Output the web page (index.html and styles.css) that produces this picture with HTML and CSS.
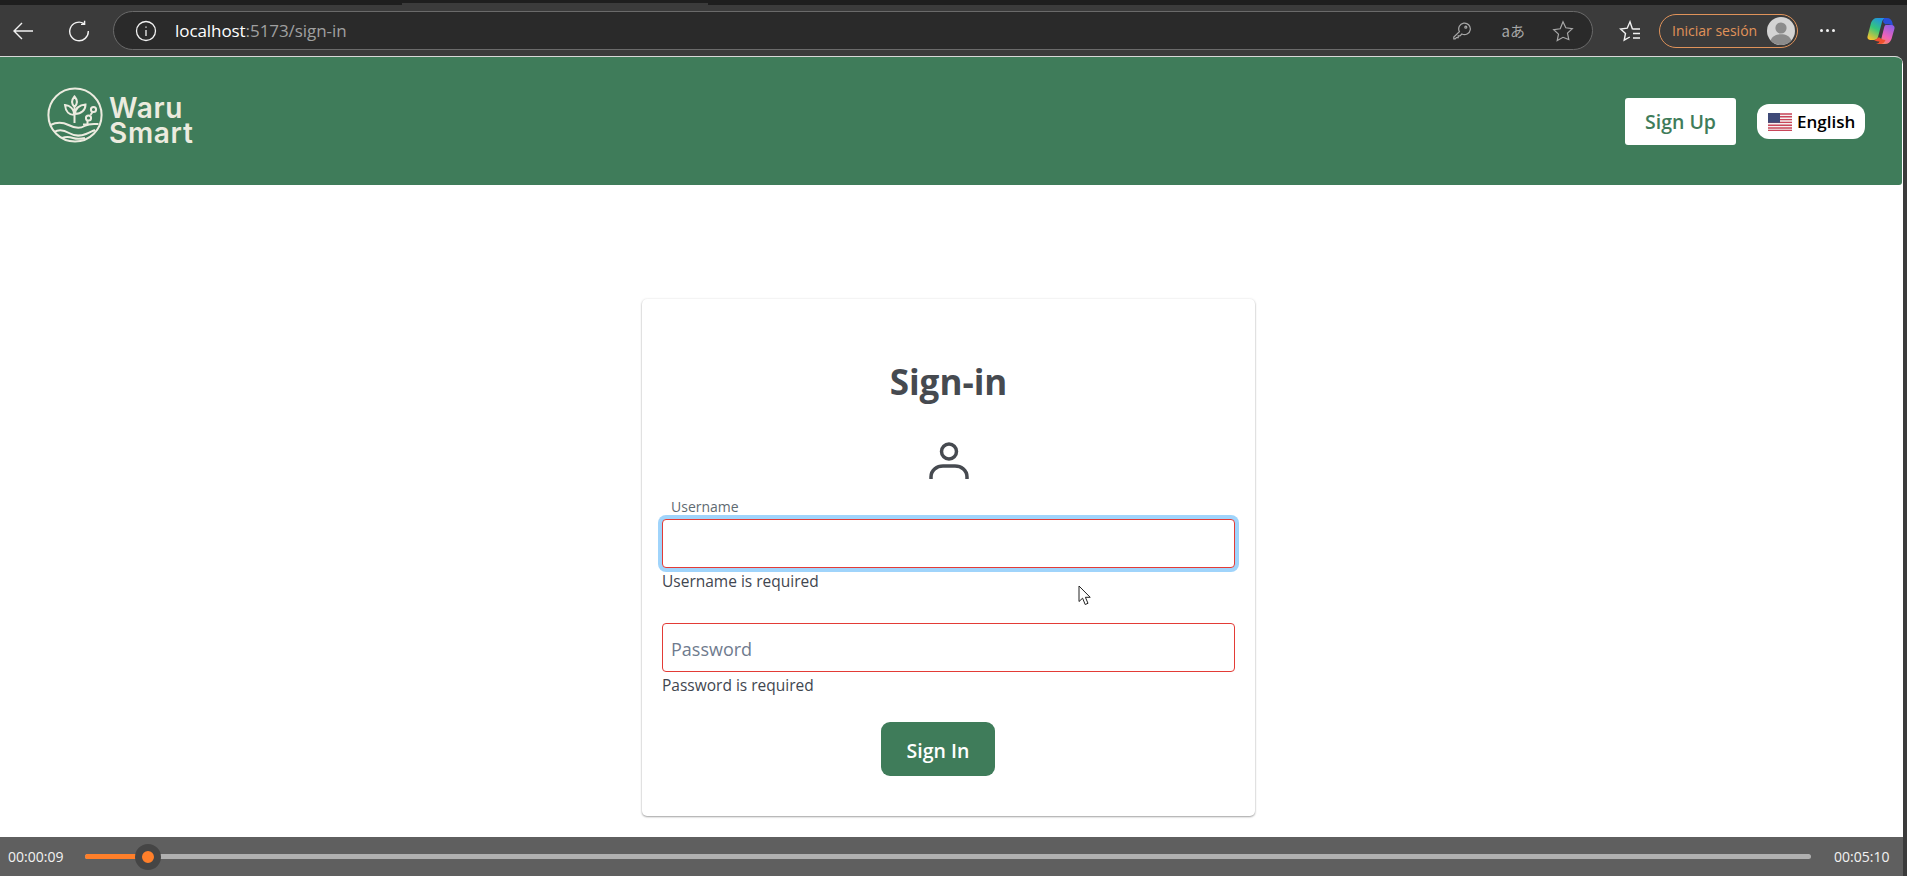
FILE: index.html
```html
<!doctype html>
<html lang="en">
    <head>
        <meta charset="UTF-8" />
        <meta name="viewport" content="width=device-width, initial-scale=1.0" />
        <title>Sign-in</title>
        <link rel="stylesheet" href="styles.css">
    </head>
    <body>
        <div class="tab-strip"><div class="tab-strip-light"></div></div>

        <!-- Browser toolbar -->
        <div class="toolbar">
            <svg class="tool-icon back-icon" width="22" height="20" viewBox="0 0 22 20"><path d="M21 10H2M10 2l-8 8 8 8" /></svg>
            <svg class="tool-icon reload-icon" width="22" height="22" viewBox="0 0 22 22"><path d="M16 3.6a9.3 9.3 0 1 0 4.3 7.4M16.6 0.8v3.6H13" /></svg>
            <div class="address-bar">
                <svg class="info-icon" width="22" height="22" viewBox="0 0 22 22"><circle cx="11" cy="11" r="9.5" /><path d="M11 10v6M11 6.4v1.4" /></svg>
                <span class="url"><span class="url-host">localhost</span>:5173/sign-in</span>
                <div class="address-icons">
                    <svg width="18" height="18" viewBox="0 0 18 18"><path d="M6.400 9.600a5.800 5.800 0 1 1 2.400 2.400L7 13.800H5.200v1.800H3.400L2.200 16.800H.800v-1.800z" /><circle cx="12.800" cy="5.200" r="1" /></svg>
                    <span class="translate-icon">aあ</span>
                    <svg width="22" height="22" viewBox="0 0 22 22"><path d="m11 1.800 2.800 6 6.500.8-4.800 4.500 1.300 6.500L11 17.300l-5.800 3.300 1.300-6.500-4.800-4.500 6.500-.8z" /></svg>
                </div>
            </div>
            <svg class="tool-icon fav-icon" width="22" height="22" viewBox="0 0 22 22"><path d="M13.600 9.500 11 1.800 8.200 8.200l-6.600.8 4.900 4.500-1.300 6.700 5.600-3.200M14 9h7M14 13.500h7M14 18h7" /></svg>
            <div class="profile-pill">
                <span>Iniciar sesión</span>
                <svg width="28" height="28" viewBox="0 0 28 28">
                    <circle cx="14" cy="14" r="14" fill="#d3d3d3" />
                    <circle cx="14" cy="11" r="5.600" fill="#8b8b8b" />
                    <path d="M3.600 23.400c1.600-4.400 5.600-6.200 10.400-6.200s8.800 1.800 10.400 6.200A14 14 0 0 1 3.600 23.400z" fill="#8b8b8b" />
                </svg>
            </div>
            <div class="more-dots"><i></i><i></i><i></i></div>
            <svg class="copilot" width="28" height="28" viewBox="0 0 28 28">
                <defs>
                    <linearGradient id="copLeft" x1="0.7" y1="0" x2="0.2" y2="1"><stop offset="0" stop-color="#1f8fe8" /><stop offset="0.5" stop-color="#35c77a" /><stop offset="1" stop-color="#f7c32e" /></linearGradient>
                    <linearGradient id="copRight" x1="0.8" y1="0" x2="0.3" y2="1"><stop offset="0" stop-color="#8f5fe8" /><stop offset="0.6" stop-color="#f062b8" /><stop offset="1" stop-color="#f58a5a" /></linearGradient>
                </defs>
                <path d="M10 1h10c-3 0-4.500 2-5 4l-4 15c-.5 2-2 3-4 3H3.500C1.500 23 0 21.500.5 19.500L4 6c1-3 3-5 6-5z" fill="url(#copLeft)" />
                <path d="M17 1h3c3 0 5 2 5.500 5l.5 3c-2-1.500-5-2-7.500-1.500L16 5z" fill="#2a4fd8" />
                <path d="M19 8h5.500c2 0 3.500 1.500 3 3.500L24.500 22c-1 3-3.500 5-6.500 5H9c3 0 4.500-2 5-4l3-12c.4-1.800 1-3 2-3z" fill="url(#copRight)" />
                <path d="M7 23c1.500 0 3-1 4-2.500l1.500 0c1.500 1.500 3.500 2.500 6 2.500-1 2.500-3 4-5.500 4H9c2 0 3-1 3.500-2.500C11 24.500 9 24 7 23z" fill="#f0502f" />
            </svg>
        </div>

        <div class="viewport">
            <div class="site-header">
                <div class="logo">
                    <svg class="logo-mark" width="56" height="58" viewBox="0 0 56 58">
                        <circle cx="28" cy="29" r="26.600" />
                        <path d="M27.500 37V21M27.500 29c-5 0-9-3.500-9.500-10 5 .5 9 4 9.500 10zM28 28c.5-5 4-9 10.500-9.500 0 5.500-4 9.500-10.500 9.500zM27.500 21c-3-3-3-7 0-10.500 3 3.500 3 7.500 0 10.500z" />
                        <path d="M3.500 39c6-3 12-3 18 0s11 4 16 1 9-2 14-2M7 46c5-3 10-2 15 1s12 3 17 1 6-3 9-4M15 52c4-1.500 8-1 11 0s8 1 12 0" />
                        <path d="M36 38.500h4.500v-4M43.500 29l2-3" />
                        <circle cx="41.500" cy="32" r="2.600" />
                        <circle cx="46.500" cy="23.500" r="2.600" />
                    </svg>
                    <div class="logo-text">Waru<br />Smart</div>
                </div>
                <div class="header-actions">
                    <button class="signup-btn">Sign Up</button>
                    <button class="lang-btn">
                        <svg width="24" height="18" viewBox="0 0 24 18">
                            <rect width="24" height="18" fill="#f4f0f0" />
                            <path d="M0 1h24M0 3.800h24M0 6.600h24M0 9.400h24M0 12.200h24M0 15h24M0 17.400h24" stroke="#c9465a" stroke-width="1.400" />
                            <rect width="12" height="9.800" fill="#3f4a78" />
                        </svg>
                        English
                    </button>
                </div>
            </div>

            <div class="main">
                <div class="card">
                    <h1>Sign-in</h1>
                    <svg class="user-icon" width="40" height="37" viewBox="0 0 40 37"><circle cx="20" cy="9.500" r="7.500" /><path d="M2 37v-2c0-7 6-11 12-11h12c6 0 12 4 12 11v2" /></svg>
                    <form>
                        <label class="field-label" for="username">Username</label>
                        <input class="field field-focus" id="username" type="text" />
                        <p class="field-error">Username is required</p>
                        <input class="field password" id="password" type="password" placeholder="Password" />
                        <p class="field-error">Password is required</p>
                        <button type="button" class="signin-btn">Sign In</button>
                    </form>
                </div>
            </div>

            <svg class="cursor" width="14" height="21" viewBox="0 0 14 21"><path d="M1 1v15.500l3.600-3.300 2.600 6.300 2.800-1.200-2.600-6h4.800z" /></svg>
        </div>

        <!-- Video player -->
        <div class="player">
            <span class="time">00:00:09</span>
            <div class="track">
                <div class="track-done"></div>
                <div class="track-knob"></div>
            </div>
            <span class="time time-end">00:05:10</span>
        </div>
    </body>
</html>
```

FILE: styles.css
```css
* {
    box-sizing: border-box;
}
html, body {
    height: 100%;
}
body {
    margin: 0;
    display: flex;
    flex-direction: column;
    height: 876px;
    overflow: hidden;
    background-color: #3b3b3b;
    font-family: "Open Sans", "Liberation Sans", sans-serif;
}
svg {
    display: block;
}

/* Browser chrome */
.tab-strip {
    height: 5px;
    padding: 3px 0 0 402px;
    background-color: #1e1e1e;
}
.tab-strip-light {
    height: 2px;
    width: 306px;
    background-color: #3b3b3b;
}
.toolbar {
    height: 51px;
    display: flex;
    align-items: center;
    background-color: #3b3b3b;
    padding-left: 12px;
}
.tool-icon {
    fill: none;
    stroke: #f2f2f2;
    stroke-width: 1.4;
}
.reload-icon {
    margin-left: 34px;
}
.address-bar {
    width: 1480px;
    height: 39px;
    margin-left: 23px;
    display: flex;
    align-items: center;
    padding-left: 21px;
    background-color: #2a2a2a;
    border: 1px solid #6a6a6a;
    border-radius: 20px;
}
.info-icon {
    fill: none;
    stroke: #f2f2f2;
    stroke-width: 1.3;
}
.url {
    margin-left: 18px;
    font-size: 17px;
    color: #a0a0a0;
    letter-spacing: -0.07px;
}
.url-host {
    color: #ffffff;
}
.address-icons {
    margin-left: auto;
    display: flex;
    align-items: center;
    gap: 29px;
    padding-right: 18px;
}
.address-icons svg {
    fill: none;
    stroke: #a8a8a8;
    stroke-width: 1.2;
}
.translate-icon {
    margin: 0 -2px 0 2px;
    font-family: "Noto Sans CJK JP", sans-serif;
    font-size: 15px;
    color: #a8a8a8;
}
.fav-icon {
    margin-left: 26px;
}
.profile-pill {
    width: 139px;
    height: 34px;
    margin-left: 18px;
    display: flex;
    align-items: center;
    justify-content: space-between;
    padding: 0 2px 0 12px;
    border: 1px solid #e0935a;
    border-radius: 17px;
    font-size: 14px;
    color: #e0935a;
}
.more-dots {
    margin-left: 22px;
    display: flex;
    gap: 3px;
}
.more-dots i {
    width: 3px;
    height: 3px;
    border-radius: 50%;
    background-color: #f2f2f2;
}
.copilot {
    margin-left: 32px;
}

/* Page */
.viewport {
    position: relative;
    flex: 1;
    min-height: 0;
    margin-right: 4px;
    background-color: #ffffff;
    border-top: 1px solid #d8d8d8;
    border-top-right-radius: 8px;
    overflow: hidden;
}
.site-header {
    height: 128px;
    display: flex;
    align-items: center;
    justify-content: space-between;
    padding: 0 37px 0 47px;
    margin-right: 1px;
    background-color: #3f7c5a;
    border-bottom-right-radius: 3px;
}
.logo {
    display: flex;
    align-items: center;
    gap: 6px;
    margin-top: -12px;
}
.logo-mark {
    fill: none;
    stroke: #ecebdf;
    stroke-width: 2;
}
.logo-text {
    font-family: "Inter", sans-serif;
    font-size: 28px;
    font-weight: 600;
    letter-spacing: 0.7px;
    line-height: 25px;
    color: #ecebdf;
    margin-top: 12px;
}
.header-actions {
    display: flex;
    align-items: center;
    gap: 21px;
    margin-top: 1px;
}
.signup-btn {
    width: 111px;
    height: 47px;
    padding: 0;
    background-color: #ffffff;
    color: #3f7c5a;
    border: none;
    border-radius: 3px;
    font-family: "Open Sans", sans-serif;
    font-size: 19.500px;
    font-weight: 600;
}
.lang-btn {
    width: 108px;
    height: 35px;
    display: flex;
    align-items: center;
    gap: 5px;
    padding: 0 0 0 11px;
    background-color: #ffffff;
    color: #000000;
    border: none;
    border-radius: 12px;
    font-family: "Open Sans", sans-serif;
    font-size: 17px;
    font-weight: 600;
}
.main {
    display: flex;
    justify-content: flex-start;
    padding: 114px 0 0 642px;
}
.card {
    width: 613px;
    height: 517px;
    padding: 0 20px;
    background-color: #ffffff;
    border-radius: 5px;
    box-shadow: 0 1px 2px rgba(0, 0, 0, 0.35), 0 0 3px rgba(0, 0, 0, 0.08);
}
.card h1 {
    margin: 61px 0 0 0;
    text-align: center;
    font-size: 35px;
    line-height: 44px;
    font-weight: 700;
    color: #464a50;
}
.user-icon {
    margin: 38px auto 0 auto;
    fill: none;
    stroke: #464a50;
    stroke-width: 3.500;
}
.field-label {
    display: block;
    margin: 18px 0 0 9px;
    font-size: 14px;
    line-height: 20px;
    color: #5f6b72;
}
.field {
    display: block;
    width: 573px;
    height: 49px;
    padding: 3px 9px 0 8px;
    margin-top: 2px;
    border: 1px solid #e33b36;
    border-radius: 4px;
    outline: none;
    font-family: "Open Sans", sans-serif;
    font-size: 18px;
}
.field-focus {
    box-shadow: 0 0 0 4px #a0d4fb;
}
.password {
    margin-top: 31px;
}
.field::placeholder {
    color: #6f7b8e;
}
.field-error {
    margin: 2px 0 0 0;
    font-size: 15.500px;
    line-height: 22px;
    color: #3f4650;
}
.signin-btn {
    display: block;
    width: 114px;
    height: 54px;
    margin: 26px 0 0 219px;
    padding: 3px 0 0 0;
    background-color: #3f7c5a;
    color: #ffffff;
    border: none;
    border-radius: 9px;
    font-family: "Open Sans", sans-serif;
    font-size: 19.500px;
    font-weight: 600;
}
.cursor {
    position: absolute;
    left: 1078px;
    top: 528px;
    fill: #ffffff;
    stroke: #222222;
    stroke-width: 1;
}

/* Video player */
.player {
    height: 39px;
    display: flex;
    align-items: center;
    margin-right: 4px;
    padding-left: 8px;
    background-color: #5f5f5f;
}
.time {
    width: 56px;
    white-space: nowrap;
    font-size: 14px;
    color: #f2f2f2;
}
.time-end {
    margin-left: 23px;
}
.track {
    position: relative;
    width: 1726px;
    height: 5px;
    margin-left: 21px;
    background-color: #b0b0b0;
    border-radius: 3px;
}
.track-done {
    width: 63px;
    height: 5px;
    background-color: #ff7f2a;
    border-radius: 3px;
}
.track-knob {
    position: absolute;
    left: 50px;
    top: -10.500px;
    width: 26px;
    height: 26px;
    border: 7px solid #454545;
    border-radius: 50%;
    background-color: #ff7f2a;
}
```
